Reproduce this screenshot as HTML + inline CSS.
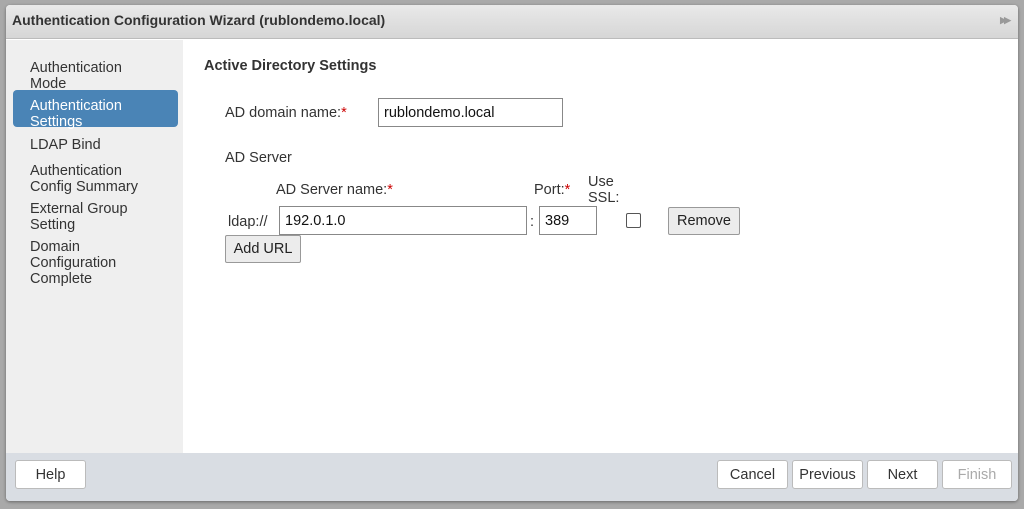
<!DOCTYPE html>
<html><head><style>
*{box-sizing:border-box;margin:0;padding:0}
body{width:1024px;height:509px;background:#a9a9a9;font-family:"Liberation Sans",sans-serif;font-size:14.5px;color:#333;position:relative;overflow:hidden}
.dlg{position:absolute;left:6px;top:5px;width:1012px;height:496px;background:#fff;border-radius:4px;overflow:hidden;box-shadow:0 1px 3px rgba(0,0,0,.4)}
.title{position:absolute;left:0;top:0;width:100%;height:34px;background:linear-gradient(#e9e9e9,#d6d6d6);border-bottom:1px solid #bbb;font-weight:bold;font-size:14px;line-height:31px;padding-left:6px;color:#333}
.arr{position:absolute;right:10px;top:0;color:#999;font-size:9px;letter-spacing:-3px}
.side{position:absolute;left:0;top:35px;width:177px;height:413px;background:#efefef}
.it{position:absolute;left:24px;font-size:14.5px;line-height:16px;color:#333}
.sel{position:absolute;left:7px;top:50px;width:165px;height:37px;background:#4a84b6;border-radius:4px}
.a{position:absolute;font-size:14.5px;line-height:17px;color:#333}
.r{color:#c00}
.inp{position:absolute;border:1px solid #888;background:#fff;font-size:14.5px;padding-left:5px;color:#111}
.btn{position:absolute;border:1px solid #999;background:#ececec;border-radius:2px;font-size:14.5px;text-align:center;color:#222}
.foot{position:absolute;left:0;top:448px;width:100%;height:48px;background:#d9dde3}
.fb{position:absolute;top:7px;height:29px;background:#fff;border:1px solid #bbb;border-radius:3px;text-align:center;line-height:29px;font-size:14.5px;color:#333}
</style></head><body>
<div class="dlg">
<div class="title">Authentication Configuration Wizard (rublondemo.local)<span class="arr">▶▶</span></div>
<div class="side">
<div class="sel"></div>
<div class="it" style="top:20px">Authentication<br>Mode</div>
<div class="it" style="top:58px;color:#fff">Authentication<br>Settings</div>
<div class="it" style="top:97px">LDAP Bind</div>
<div class="it" style="top:123px">Authentication<br>Config Summary</div>
<div class="it" style="top:161px">External Group<br>Setting</div>
<div class="it" style="top:199px">Domain<br>Configuration<br>Complete</div>
</div>
<div class="a" style="left:198px;top:53px;font-weight:bold">Active Directory Settings</div>
<div class="a" style="left:219px;top:100px">AD domain name:<span class="r">*</span></div>
<div class="inp" style="left:372px;top:93px;width:185px;height:29px;line-height:29px">rublondemo.local</div>
<div class="a" style="left:219px;top:145px">AD Server</div>
<div class="a" style="left:270px;top:177px">AD Server name:<span class="r">*</span></div>
<div class="a" style="left:528px;top:177px">Port:<span class="r">*</span></div>
<div class="a" style="left:582px;top:169px;line-height:16px">Use<br>SSL:</div>
<div class="a" style="left:222px;top:209px">ldap://</div>
<div class="inp" style="left:273px;top:201px;width:248px;height:29px;line-height:29px">192.0.1.0</div>
<div class="a" style="left:524px;top:209px">:</div>
<div class="inp" style="left:533px;top:201px;width:58px;height:29px;line-height:29px">389</div>
<div style="position:absolute;left:620px;top:208px;width:15px;height:15px;border:1px solid #555;border-radius:2px;background:#fff"></div>
<div class="btn" style="left:662px;top:202px;width:72px;height:28px;line-height:27px">Remove</div>
<div class="btn" style="left:219px;top:230px;width:76px;height:28px;line-height:27px">Add URL</div>
<div class="foot">
<div class="fb" style="left:9px;width:71px">Help</div>
<div class="fb" style="left:711px;width:71px">Cancel</div>
<div class="fb" style="left:786px;width:71px">Previous</div>
<div class="fb" style="left:861px;width:71px">Next</div>
<div class="fb" style="left:936px;width:70px;color:#aaa">Finish</div>
</div>
</div>
</body></html>
